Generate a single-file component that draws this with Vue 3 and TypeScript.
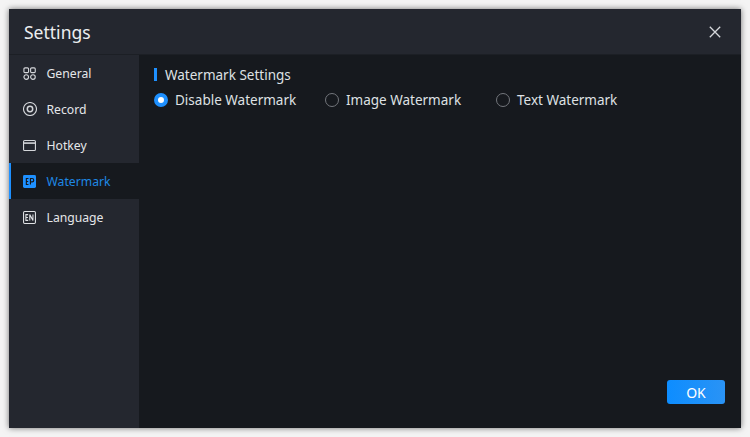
<script setup lang="ts">
const options = [
  { label: 'Disable Watermark', checked: true, width: 171 },
  { label: 'Image Watermark', checked: false, width: 171 },
  { label: 'Text Watermark', checked: false, width: 171 },
]
</script>

<template>
  <div class="page">
    <div class="window">
      <header class="titlebar">
        <span class="title">Settings</span>
        <svg class="close" width="12" height="12" viewBox="0 0 12 12" fill="none" stroke="#d6d8dc" stroke-width="1.3">
          <path d="M.8.8l10.4 10.4M11.2.8L.8 11.2" />
        </svg>
      </header>
      <div class="body">
        <nav class="sidebar">
          <div class="item">
            <svg class="icon" viewBox="0 0 14 14" fill="none" stroke="#d4d6da" stroke-width="1.2">
              <rect x="1" y="1" width="5" height="5" rx="1.2" />
              <rect x="8.2" y="1" width="5" height="5" rx="1.2" />
              <circle cx="3.5" cy="10.8" r="2.5" />
              <circle cx="10.7" cy="10.8" r="2.5" />
            </svg>
            <span>General</span>
          </div>
          <div class="item">
            <svg class="icon wide" viewBox="0 0 14 14" fill="none" stroke="#d4d6da" stroke-width="1.1">
              <circle cx="7" cy="7" r="6.5" />
              <circle cx="7" cy="7" r="2.7" stroke-width="1.5" />
            </svg>
            <span>Record</span>
          </div>
          <div class="item">
            <svg class="icon" viewBox="0 0 14 14" fill="none" stroke="#d4d6da" stroke-width="1.2">
              <rect x=".6" y="1.6" width="12.8" height="10.8" rx="1.2" />
              <path d="M1 4.4h12" stroke-width="1.7" />
            </svg>
            <span>Hotkey</span>
          </div>
          <div class="item active">
            <svg class="icon" viewBox="0 0 14 14">
              <rect width="14" height="14" y="0" rx="1.6" fill="#1e90ff" />
              <path d="M3 3.8h2.9M3 7h2.6M3 10.2h2.9M3.6 3.8v6.4M8 10.2V3.8h1.8a1.7 1.7 0 010 3.6H8" fill="none" stroke="#14171c" stroke-width="1.2" />
            </svg>
            <span>Watermark</span>
          </div>
          <div class="item">
            <svg class="icon" viewBox="0 0 14 14" fill="none" stroke="#e0e2e5" stroke-width="1.15">
              <rect x=".6" y=".6" width="12.8" height="12.8" rx="1.2" />
              <path d="M5.6 3.9H3.1v6.2h2.5M3.1 7h2.2M7.3 10.1V3.9l3.4 6.2V3.9" />
            </svg>
            <span>Language</span>
          </div>
        </nav>
        <main class="content">
          <div class="heading">Watermark Settings</div>
          <div class="radios">
            <label v-for="o in options" :key="o.label" class="radio" :style="{ width: o.width + 'px' }">
              <span class="dot" :class="{ on: o.checked }"></span>
              <span>{{ o.label }}</span>
            </label>
          </div>
          <div class="footer">
            <button class="ok">OK</button>
          </div>
        </main>
      </div>
    </div>
  </div>
</template>

<style>
html, body { margin: 0; background: #f4f4f4; }
</style>

<style scoped>
.page {
  width: 750px;
  height: 437px;
  box-sizing: border-box;
  padding: 9px;
  font-family: "Noto Sans", "Open Sans", sans-serif;
  overflow: hidden;
}
.window {
  width: 732px;
  height: 419px;
  display: flex;
  flex-direction: column;
  background: #16191e;
  box-shadow: 0 0 6px rgba(0, 0, 0, .55);
}
.titlebar {
  height: 46px;
  box-sizing: border-box;
  flex: none;
  display: flex;
  align-items: center;
  justify-content: space-between;
  padding: 0 20px 0 15px;
  background: #24272f;
  border-bottom: 1px solid #1c1f25;
}
.title {
  color: #eceef0;
  font-size: 17.5px;
}
.close { display: block; }
.body { flex: 1; display: flex; min-height: 0; }
.sidebar {
  width: 130px;
  flex: none;
  background: #24272f;
}
.item {
  height: 36px;
  display: flex;
  align-items: center;
  gap: 10px;
  padding-left: 13.5px;
  box-sizing: border-box;
  color: #e4e6e9;
  font-size: 12.2px;
}
.icon { width: 13px; height: 13px; flex: none; margin: 0 .5px; }
.icon.wide { width: 14px; height: 14px; margin: 0; }
.item.active {
  background: #16191e;
  color: #1e88e5;
  border-left: 2px solid #1e90ff;
  padding-left: 11.5px;
}
.content {
  flex: 1;
  display: flex;
  flex-direction: column;
  padding: 13px 16px 24px 15px;
  color: #dfe1e4;
}
.heading {
  border-left: 3px solid #1e90ff;
  height: 13px;
  line-height: 15px;
  padding-left: 8px;
  font-size: 13.5px;
}
.radios { display: flex; margin-top: 7px; height: 24px; align-items: center; }
.radio {
  display: flex;
  align-items: center;
  gap: 7px;
  font-size: 13.5px;
  line-height: 20px;
}
.dot {
  width: 14px;
  height: 14px;
  box-sizing: border-box;
  border-radius: 50%;
  border: 1px solid #73767c;
  flex: none;
}
.dot.on {
  border: 4px solid #1e90ff;
  background: #fff;
}
.footer { margin-top: auto; display: flex; justify-content: flex-end; }
.ok {
  width: 58px;
  height: 24px;
  border: 0;
  border-radius: 3px;
  padding: 0;
  color: #fff;
  font: inherit;
  font-size: 14px;
  background: linear-gradient(90deg, #0d8dff, #2a93f5);
}
</style>
